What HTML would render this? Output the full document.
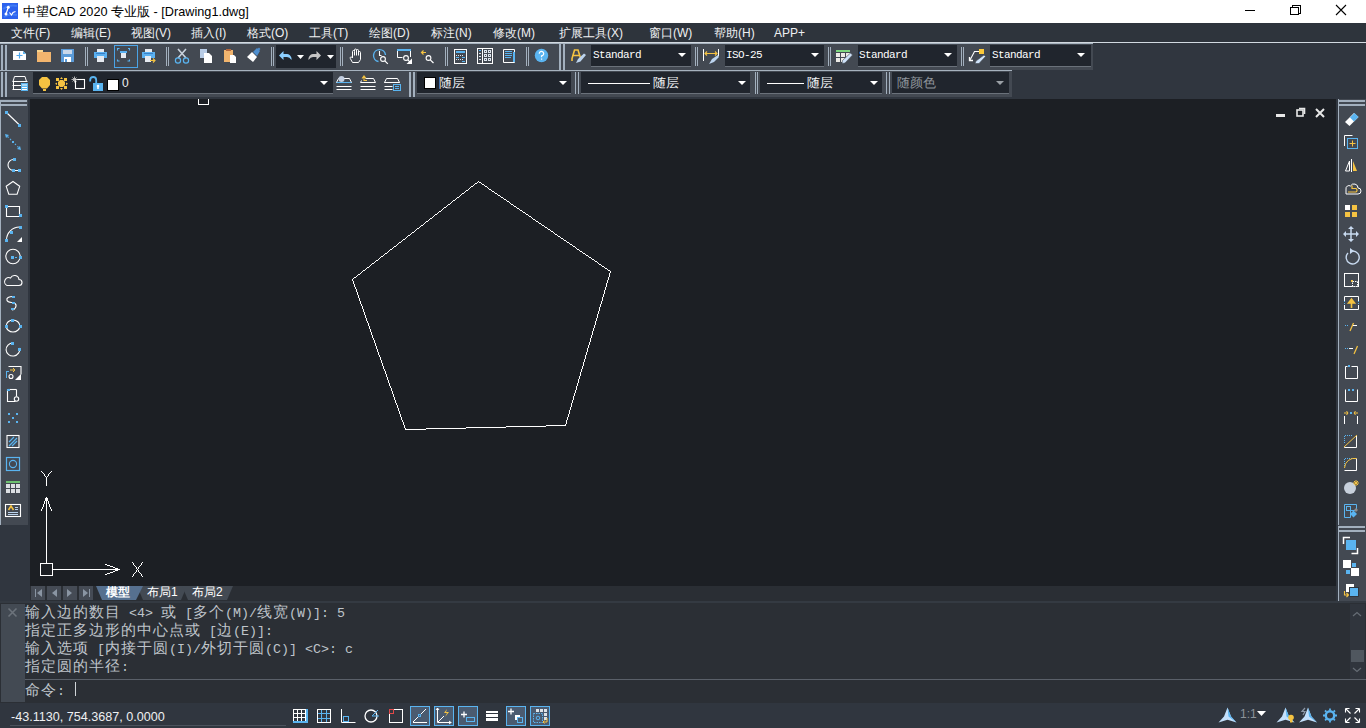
<!DOCTYPE html>
<html><head><meta charset="utf-8">
<style>
*{margin:0;padding:0;box-sizing:border-box}
html,body{width:1366px;height:728px;overflow:hidden;background:#30363f;font-family:"Liberation Sans",sans-serif}
.a{position:absolute}
.bg{position:absolute}
.t{position:absolute;white-space:pre;font-family:"Liberation Sans",sans-serif}
.mi{position:absolute;top:25px;font-size:12px;color:#eef0f2;line-height:17px;white-space:pre}
.cb{position:absolute;background:#20252d;border-bottom:1px solid #6a717a}
.sm{position:absolute;font-family:"Liberation Mono",monospace;font-size:11px;color:#fff;letter-spacing:-0.6px;white-space:pre;line-height:14px}
.cn{position:absolute;font-size:13px;color:#f0f2f4;white-space:pre;line-height:16px}
.cm{position:absolute;left:25px;font-family:"Liberation Mono",monospace;font-size:13.33px;color:#bfc4ca;white-space:pre;line-height:18px}
.cm b{font-weight:normal;font-size:15px;letter-spacing:1px;font-family:"Liberation Sans",sans-serif}
svg{position:absolute;left:0;top:0;z-index:1}
.t,.mi,.sm,.cn,.cm{z-index:2}
</style></head><body>
<!-- backgrounds -->
<div class="bg" style="left:0;top:0;width:1366px;height:23px;background:#fff"></div>
<div class="bg" style="left:0;top:23px;width:1366px;height:19px;background:#2e343c"></div>
<div class="bg" style="left:0;top:42px;width:1366px;height:1px;background:#d2d9e0"></div>
<div class="bg" style="left:0;top:43px;width:1093px;height:1px;background:#a6b2be"></div>
<div class="bg" style="left:0;top:44px;width:1093px;height:26px;background:#434952"></div>
<div class="bg" style="left:0;top:70px;width:1012px;height:1px;background:#a6b2be"></div>
<div class="bg" style="left:0;top:71px;width:1012px;height:26px;background:#434952"></div>
<div class="bg" style="left:0;top:99px;width:28px;height:426px;background:#434952"></div>
<div class="bg" style="left:1338px;top:99px;width:28px;height:502px;background:#434952"></div>
<div class="bg" style="left:30px;top:99px;width:1306px;height:487px;background:#1c1f24"></div>
<div class="bg" style="left:0;top:603px;width:1366px;height:100px;background:#2b2f35"></div>
<!-- title -->
<div class="t" style="left:23px;top:4px;font-size:12.7px;line-height:17px;color:#000">中望CAD 2020 专业版 - [Drawing1.dwg]</div>
<!-- menu -->
<div class="mi" style="left:11px">文件(F)</div>
<div class="mi" style="left:71px">编辑(E)</div>
<div class="mi" style="left:131px">视图(V)</div>
<div class="mi" style="left:191px">插入(I)</div>
<div class="mi" style="left:247px">格式(O)</div>
<div class="mi" style="left:309px">工具(T)</div>
<div class="mi" style="left:369px">绘图(D)</div>
<div class="mi" style="left:431px">标注(N)</div>
<div class="mi" style="left:493px">修改(M)</div>
<div class="mi" style="left:559px">扩展工具(X)</div>
<div class="mi" style="left:649px">窗口(W)</div>
<div class="mi" style="left:714px">帮助(H)</div>
<div class="mi" style="left:774px">APP+</div>
<!-- toolbar1 combos -->
<div class="cb" style="left:276px;top:45px;width:60px;height:23px;border:none"></div>
<div class="cb" style="left:591px;top:45px;width:100px;height:22px"></div>
<div class="cb" style="left:725px;top:45px;width:99px;height:22px"></div>
<div class="cb" style="left:858px;top:45px;width:99px;height:22px"></div>
<div class="cb" style="left:990px;top:45px;width:101px;height:22px"></div>
<div class="sm" style="left:593px;top:48px">Standard</div>
<div class="sm" style="left:726px;top:48px">ISO-25</div>
<div class="sm" style="left:859px;top:48px">Standard</div>
<div class="sm" style="left:992px;top:48px">Standard</div>
<!-- toolbar2 combos -->
<div class="cb" style="left:33px;top:72px;width:300px;height:22px"></div>
<div class="cb" style="left:417px;top:72px;width:154px;height:22px"></div>
<div class="cb" style="left:581px;top:72px;width:169px;height:22px"></div>
<div class="cb" style="left:760px;top:72px;width:122px;height:22px"></div>
<div class="cb" style="left:892px;top:72px;width:117px;height:22px"></div>
<div class="cn" style="left:122px;top:75px;font-size:12px">0</div>
<div class="cn" style="left:439px;top:75px">随层</div>
<div class="cn" style="left:653px;top:75px">随层</div>
<div class="cn" style="left:807px;top:75px">随层</div>
<div class="cn" style="left:897px;top:75px;color:#8f959c">随颜色</div>
<!-- tabs -->
<div class="t" style="left:106px;top:585px;font-size:12px;line-height:15px;color:#fff;font-weight:bold">模型</div>
<div class="t" style="left:147px;top:585px;font-size:12px;line-height:15px;color:#fff">布局1</div>
<div class="t" style="left:192px;top:585px;font-size:12px;line-height:15px;color:#fff">布局2</div>
<!-- command -->
<div class="bg" style="left:1px;top:604px;width:24px;height:98px;background:#434a53"></div>
<div class="cm" style="top:603px"><b>输入边的数目</b> &lt;4&gt; <b>或</b> [<b>多个</b>(M)/<b>线宽</b>(W)]: 5</div>
<div class="cm" style="top:621px"><b>指定正多边形的中心点或</b> [<b>边</b>(E)]:</div>
<div class="cm" style="top:639px"><b>输入选项</b> [<b>内接于圆</b>(I)/<b>外切于圆</b>(C)] &lt;C&gt;: c</div>
<div class="cm" style="top:657px"><b>指定圆的半径</b>:</div>
<div class="bg" style="left:25px;top:679px;width:1341px;height:1px;background:#5a6069"></div>
<div class="cm" style="top:681px"><b>命令</b>: </div>
<div class="bg" style="left:75px;top:682px;width:1px;height:14px;background:#d0d4d8"></div>
<div class="bg" style="left:1350px;top:604px;width:15px;height:75px;background:#30353d"></div>
<div class="bg" style="left:1351px;top:650px;width:13px;height:12px;background:#50575f"></div>
<!-- status -->
<div class="t" style="left:11px;top:709px;font-size:12.6px;line-height:16px;color:#eef0f2">-43.1130, 754.3687, 0.0000</div>
<div class="bg" style="left:10px;top:725px;width:276px;height:1px;background:#4b525c"></div>
<div class="t" style="left:1240px;top:706px;font-size:12px;line-height:16px;color:#8d939a">1:1</div>
<svg width="1366" height="728" viewBox="0 0 1366 728">
<defs>
<linearGradient id="lg" x1="0" y1="0" x2="1" y2="1"><stop offset="0" stop-color="#5a8df5"/><stop offset="1" stop-color="#1d4fd8"/></linearGradient>
</defs>
<!-- title icon -->
<rect x="2" y="3" width="16" height="16" fill="#2c62ee"/>
<path d="M3 9c4-3 9-4 14-3M4 17c3-2 8-3 13-2" stroke="#4a86f7" stroke-width="2" fill="none" opacity="0.7"/>
<path d="M8.3 7.3L6 14M9.5 12.5l2 2.5 1.5-2.5 2.5-1" stroke="#fff" stroke-width="1.2" fill="none"/>
<circle cx="8.3" cy="7.3" r="1.5" fill="#fff"/><circle cx="6" cy="14" r="1.5" fill="#fff"/>
<!-- window buttons -->
<g stroke="#000" stroke-width="1" fill="none" shape-rendering="crispEdges">
<path d="M1245 10.5h10"/>
<rect x="1290.5" y="7.5" width="8" height="7"/>
<path d="M1292.5 7.5v-2h8v8h-2"/>
</g>
<path d="M1336 5l10 10M1346 5l-10 10" stroke="#000" stroke-width="1.1"/>

<!-- toolbar grips -->
<g fill="#a3b0be" shape-rendering="crispEdges">
<rect x="1" y="45" width="2" height="25"/><rect x="5" y="45" width="2" height="25"/>
<rect x="1" y="72" width="2" height="25"/><rect x="5" y="72" width="2" height="25"/>
<rect x="559" y="44" width="2" height="26"/><rect x="563" y="44" width="2" height="26"/>
<!-- small separators tb1 -->
<rect x="85" y="47" width="1" height="19"/><rect x="87" y="47" width="1" height="19"/>
<rect x="166" y="47" width="1" height="19"/><rect x="168" y="47" width="1" height="19"/>
<rect x="271" y="47" width="1" height="19"/><rect x="273" y="47" width="1" height="19"/>
<rect x="340" y="47" width="1" height="19"/><rect x="342" y="47" width="1" height="19"/>
<rect x="445" y="47" width="1" height="19"/><rect x="447" y="47" width="1" height="19"/>
<rect x="526" y="47" width="1" height="19"/><rect x="528" y="47" width="1" height="19"/>
<rect x="695" y="47" width="1" height="19"/><rect x="697" y="47" width="1" height="19"/>
<rect x="828" y="47" width="1" height="19"/><rect x="830" y="47" width="1" height="19"/>
<rect x="961" y="47" width="1" height="19"/><rect x="963" y="47" width="1" height="19"/>
<!-- tb2 separators -->
<rect x="409" y="72" width="2" height="25"/><rect x="413" y="72" width="2" height="25"/>
<rect x="575" y="72" width="1" height="22"/><rect x="578" y="72" width="1" height="22"/>
<rect x="755" y="72" width="1" height="22"/><rect x="757" y="72" width="1" height="22"/>
<rect x="886" y="72" width="1" height="22"/><rect x="889" y="72" width="1" height="22"/>
<!-- left tb grip -->
<rect x="0" y="100" width="1" height="425"/>
<rect x="1" y="100" width="26" height="2"/><rect x="1" y="104" width="26" height="2"/>
<!-- right tb grip -->
<rect x="1338" y="99" width="1" height="426"/>
<rect x="1339" y="100" width="26" height="2"/><rect x="1339" y="104" width="26" height="2"/>
<rect x="1338" y="526" width="1" height="75"/>
<rect x="1339" y="526" width="26" height="2"/><rect x="1339" y="530" width="26" height="2"/>
</g>

<!-- ===== toolbar1 icons ===== -->
<!-- new -->
<path d="M13 51h10l3 3v6h-13z" fill="#fff"/>
<path d="M23 51l3 3h-3z" fill="#5ab4f0"/>
<path d="M19.5 52.5v6M16.5 55.5h6" stroke="#4fa8ee" stroke-width="1.2"/>
<!-- folder -->
<rect x="37" y="50" width="6" height="3" fill="#f8d590"/>
<rect x="37" y="52" width="14" height="10" fill="#f2b56e"/>
<!-- save -->
<rect x="61" y="49" width="13" height="13" fill="#5b9bd8"/>
<rect x="63" y="50" width="9" height="4" fill="#c9d8ea"/>
<rect x="64" y="57" width="7" height="5" fill="#fff"/>
<rect x="65" y="59" width="2" height="3" fill="#5b9bd8"/>
<!-- print -->
<rect x="97" y="49" width="7" height="3" fill="#e6eaf0"/>
<rect x="94" y="52" width="13" height="6" fill="#5ab0f0"/><rect x="96" y="53" width="9" height="1" fill="#3b7fc4"/>
<rect x="97" y="56" width="7" height="6" fill="#e6eaf0"/>
<!-- print preview box -->
<rect x="114.5" y="45.5" width="23" height="22" fill="none" stroke="#4aa3e6"/>
<path d="M117.5 50.5v-2h2M128 48.5h1.5v2M129.5 59.5v1.5h-2M119.5 61h-2v-1.5" stroke="#5ab4f0" fill="none" stroke-width="1.1"/>
<rect x="120" y="51" width="7" height="2" fill="#5ab0f0"/>
<rect x="121" y="53" width="5" height="5" fill="#e6eaf0"/>
<!-- plot -->
<rect x="145" y="49" width="7" height="3" fill="#e6eaf0"/>
<rect x="142" y="52" width="13" height="6" fill="#5ab0f0"/><rect x="144" y="53" width="9" height="1" fill="#3b7fc4"/>
<rect x="145" y="56" width="6" height="6" fill="#e6eaf0"/>
<path d="M150 60.5h5M153 58.5l2 2-2 2" stroke="#f5c342" fill="none" stroke-width="1.1"/>
<!-- scissors -->
<path d="M178 49l8 9M186 49l-8 9" stroke="#c9d2dc" stroke-width="1.6"/>
<circle cx="178" cy="60.5" r="2.6" fill="none" stroke="#5ab4f0" stroke-width="1.2"/>
<circle cx="186" cy="60.5" r="2.6" fill="none" stroke="#5ab4f0" stroke-width="1.2"/>
<!-- copy -->
<rect x="200" y="49" width="7" height="9" fill="#b8cce6"/>
<path d="M204 53h5l3 3v7h-8z" fill="#fff"/>
<!-- paste -->
<rect x="224" y="50" width="9" height="12" fill="#f2b56e"/>
<rect x="226" y="49" width="5" height="2" fill="#b5673c"/>
<path d="M230 55h4l2 2v6h-6z" fill="#fff"/>
<!-- brush -->
<path d="M247 57l5-5 5 5-4 5z" fill="#fff"/>
<path d="M253 52l4-4 3 3-3 5z" fill="#4f8fcf"/>
<rect x="258" y="48" width="2" height="2" fill="#4f8fcf" transform="rotate(45 259 49)"/>
<!-- undo / redo -->
<path d="M279 55.5L283.5 51V54H287Q290 54 291.5 58V60Q289.5 57 287 57H283.5V60Z" fill="#8ccfff"/>
<path d="M297 55h7l-3.5 4z" fill="#fff"/>
<path d="M321 55.5L316.5 51V54H313Q310 54 308.5 58V60Q310.5 57 313 57H316.5V60Z" fill="#c4c4c4"/>
<path d="M327 55h7l-3.5 4z" fill="#fff"/>
<!-- hand -->
<path d="M352.5 58V51.5a1 1 0 0 1 2 0V55.5M354.5 51V50a1 1 0 0 1 2 0V55.5M356.5 50.5a1 1 0 0 1 2 0V55.5M358.5 52.5a1 1 0 0 1 2 0V59.5L358.5 62.5H352.5L350.3 58.5a1 1 0 0 1 1.5-1.3L352.5 58" fill="none" stroke="#fff" stroke-width="1"/>
<!-- zoom realtime -->
<path d="M378.5 61.5A6 6 0 1 1 385.5 55" fill="none" stroke="#5ab4f0" stroke-width="1.4"/>
<path d="M379.5 51v4.5h2" stroke="#fff" fill="none" stroke-width="1.1"/>
<circle cx="383" cy="59" r="2.4" fill="none" stroke="#fff" stroke-width="1.1"/>
<path d="M384.8 60.8l3 3" stroke="#fff" stroke-width="1.2"/>
<!-- zoom window -->
<path d="M397.5 50v7.5h5M410.5 50v7" fill="none" stroke="#fff"/>
<rect x="397" y="49" width="14" height="2" fill="#5ab4f0"/>
<circle cx="406" cy="58" r="2.4" fill="none" stroke="#fff" stroke-width="1.1"/>
<path d="M407.8 59.8l2.5 2.5" stroke="#fff" stroke-width="1.2"/>
<path d="M412 58.5v5.5h-5.5z" fill="#fff"/>
<!-- zoom previous -->
<path d="M421.5 52.5h4.5M423.5 50.5l-2 2 2 2" stroke="#f5c342" fill="none" stroke-width="1.2"/>
<circle cx="428.5" cy="58" r="2.4" fill="none" stroke="#fff" stroke-width="1.1"/>
<path d="M430.3 59.8l3.2 3.2" stroke="#fff" stroke-width="1.2"/>
<!-- calc -->
<rect x="454.5" y="49.5" width="12" height="14" fill="none" stroke="#fff"/>
<rect x="456" y="51" width="9" height="2" fill="#5ab4f0"/>
<g fill="#dfe6ee"><rect x="456" y="55" width="1" height="1"/><rect x="458" y="55" width="1" height="1"/><rect x="460" y="55" width="1" height="1"/><rect x="462" y="55" width="1" height="1"/><rect x="456" y="59" width="1" height="1"/><rect x="458" y="59" width="1" height="1"/><rect x="460" y="59" width="1" height="1"/><rect x="462" y="59" width="1" height="1"/></g>
<rect x="456" y="57" width="3" height="1" fill="#5ab4f0"/><rect x="462" y="57" width="3" height="1" fill="#5ab4f0"/><rect x="462" y="61" width="3" height="1" fill="#5ab4f0"/>
<!-- grid -->
<rect x="477.5" y="48.5" width="15" height="15" fill="none" stroke="#fff"/>
<path d="M482.5 48.5v15" stroke="#fff"/>
<g fill="none" stroke="#dfe6ee"><rect x="484.5" y="50.5" width="2" height="2"/><rect x="488.5" y="50.5" width="2" height="2"/><rect x="484.5" y="54.5" width="2" height="2"/><rect x="488.5" y="54.5" width="2" height="2"/><rect x="484.5" y="58.5" width="2" height="2"/><rect x="488.5" y="58.5" width="2" height="2"/></g>
<rect x="479" y="50" width="2" height="1" fill="#5ab4f0"/>
<g fill="#dfe6ee"><rect x="479" y="53" width="2" height="1"/><rect x="479" y="56" width="2" height="1"/><rect x="479" y="59" width="2" height="1"/></g>
<!-- doc -->
<path d="M503.5 49.5h11v13h-11z" fill="none" stroke="#fff"/>
<rect x="505" y="51" width="7" height="1" fill="#5ab4f0"/><rect x="505" y="53" width="7" height="1" fill="#5ab4f0"/><rect x="505" y="55" width="7" height="1" fill="#5ab4f0"/><rect x="505" y="57" width="6" height="1" fill="#5ab4f0"/>
<rect x="513" y="52" width="2" height="10" fill="#5ab4f0"/>
<!-- help -->
<circle cx="541.5" cy="55.5" r="6.7" fill="#5ab4f0"/>
<path d="M539.3 53.8a2.2 2.2 0 1 1 2.2 2v1.5" fill="none" stroke="#fff" stroke-width="1.2"/>
<rect x="541" y="58.5" width="1.2" height="1.2" fill="#fff"/>
<!-- text style -->
<path d="M572 61v-2.5l2.5-8.5h3.5l2.5 8M572.5 55.5h7" stroke="#f5c342" stroke-width="1.6" fill="none"/>
<path d="M576 63l2-4 6-5.5 2 1.5-5.5 6.5z" fill="#bcd4ee"/>
<!-- combos triangles -->
<g fill="#fff">
<path d="M678 53h8l-4 4z"/><path d="M811 53h8l-4 4z"/><path d="M944 53h8l-4 4z"/><path d="M1077 53h8l-4 4z"/>
<path d="M320 81h8l-4 4z"/><path d="M559 81h8l-4 4z"/><path d="M738 81h8l-4 4z"/><path d="M870 81h8l-4 4z"/>
</g>
<path d="M996 81h8l-4 4z" fill="#9aa0a6"/>
<!-- dim style -->
<path d="M703.5 49v12M718.5 49v7" stroke="#fff"/>
<path d="M705 53.5h12M707 51.5l-2 2 2 2M715 51.5l2 2-2 2" stroke="#f5c342" fill="none" stroke-width="1.1"/>
<path d="M709 64l3-5 6-4 1 2-5 5z" fill="#bcd4ee"/>
<!-- table style -->
<rect x="836" y="50" width="14" height="2" fill="#7dd67f"/>
<g fill="#eceae6"><rect x="836" y="53" width="4" height="4"/><rect x="841" y="53" width="4" height="4"/><rect x="846" y="53" width="4" height="4"/><rect x="836" y="58" width="4" height="4"/><rect x="841" y="58" width="4" height="4"/></g>
<path d="M842 63.5l0.5-3 8-7.5 2 2-7.5 8z" fill="#cfe3fa" stroke="#434952" stroke-width="0.6"/>
<!-- mleader -->
<rect x="979" y="49" width="5" height="5" fill="#fbc93a"/>
<path d="M979 51.5h-4.5l-4.5 8.5" stroke="#fff" fill="none" stroke-width="1.1"/>
<path d="M969.5 57v3.5h3.5" stroke="#fff" fill="none" stroke-width="1.3"/>
<path d="M975 63.5l1-2.5 8-6 1.5 1.5-6.5 7z" fill="#cfe3fa" stroke="#434952" stroke-width="0.6"/>
<!-- ===== toolbar2 icons ===== -->
<!-- layer manager -->
<g stroke="#fff" fill="none" stroke-width="1">
<path d="M13 81.5l1.5-5h10.5l1.5 5zM12.5 81.5h15M12.5 85.5h9M12.5 89.5h9M13.5 81.5v8"/>
</g>
<rect x="21" y="83" width="7" height="8" fill="#5ab4f0"/>
<path d="M22 85h5M22 87.5h5M22 89.5h5" stroke="#fff" stroke-width="1"/>
<!-- bulb -->
<path d="M42 77h5l3 3v5l-3 3.5h-5l-3-3.5v-5z" fill="#f5c342"/>
<rect x="43" y="89" width="3" height="2" fill="#f5c342"/>
<!-- sun -->
<g fill="#f5c342"><path d="M60 80h3l2 2v3l-2 2h-3l-2-2v-3z"/><rect x="56" y="78" width="3" height="3"/><rect x="64" y="78" width="3" height="3"/><rect x="56" y="86" width="3" height="3"/><rect x="64" y="86" width="3" height="3"/>
<path d="M60 79h3l-1.5-2zM60 88h3l-1.5 2zM57 82.5v2.5l-2-1.25zM66 82.5v2.5l2-1.25z"/></g>
<!-- freeze vp -->
<rect x="75.5" y="79.5" width="9" height="9" fill="none" stroke="#fff" stroke-width="1.1"/>
<path d="M72.5 77.5l4 4M76.5 77.5l-4 4M74.5 76.5v6M71.5 79.5h6" stroke="#c8c8c8" stroke-width="0.9"/>
<!-- lock -->
<path d="M90.2 81.5v-1.5a3 3 0 0 1 6 0v3" fill="none" stroke="#5ab4f0" stroke-width="1.8"/>
<rect x="93" y="83" width="10" height="8" fill="#5ab4f0"/>
<circle cx="98" cy="86" r="1.3" fill="#fff"/><rect x="97.2" y="86" width="1.6" height="3" fill="#fff"/>
<!-- color swatch -->
<rect x="107.5" y="79.5" width="11" height="11" fill="#fff" stroke="#000"/>
<!-- layer icons -->
<g stroke="#fff" fill="none">
<path d="M336.5 82.5l2-4h11l2 4zM336.5 82.5h15M336.5 86.5h15M336.5 89.5h15"/>
<path d="M365.5 78.5h8l2 4M360.5 82.5h15M360.5 86.5h15M360.5 89.5h15M360.5 82.5l1-2"/>
<path d="M384.5 82.5l2-4h11l2 4zM384.5 82.5h15M384.5 86.5h8M384.5 89.5h8"/>
</g>
<path d="M336.5 82.5h15" stroke="#5ab4f0"/>
<circle cx="341.5" cy="79" r="3" fill="#c2cee0"/>
<path d="M367 80.5h-3v-4M362 78.5l2-2.5 2 2.5" stroke="#f5c342" fill="none" stroke-width="1.1"/>
<rect x="393.5" y="84.5" width="7" height="6" fill="#434952" stroke="#5ab4f0"/>
<path d="M395 86.5h4M395 88.5h4" stroke="#5ab4f0"/>
<!-- color combo swatch -->
<rect x="424.5" y="77.5" width="11" height="11" fill="#fff" stroke="#000"/>
<!-- linetype lines -->
<rect x="588" y="83" width="62" height="1" fill="#fff"/>
<rect x="767" y="83" width="37" height="1" fill="#fff"/>

<!-- ===== canvas ===== -->
<g fill="none" stroke="#fff" shape-rendering="crispEdges">
<path d="M198.5 99v5.5h10v-5.5"/>
</g>
<path fill="#fff" d="M478 181h1v1h-1zM477 182h1v1h-1zM479 182h2v1h-2zM475 183h2v1h-2zM481 183h1v1h-1zM474 184h1v1h-1zM482 184h2v1h-2zM473 185h1v1h-1zM484 185h1v1h-1zM471 186h2v1h-2zM485 186h2v1h-2zM470 187h1v1h-1zM487 187h1v1h-1zM469 188h1v1h-1zM488 188h1v1h-1zM468 189h1v1h-1zM489 189h2v1h-2zM466 190h2v1h-2zM491 190h1v1h-1zM465 191h1v1h-1zM492 191h2v1h-2zM464 192h1v1h-1zM494 192h1v1h-1zM462 193h2v1h-2zM495 193h2v1h-2zM461 194h1v1h-1zM497 194h1v1h-1zM460 195h1v1h-1zM498 195h2v1h-2zM459 196h1v1h-1zM500 196h1v1h-1zM457 197h2v1h-2zM501 197h2v1h-2zM456 198h1v1h-1zM503 198h1v1h-1zM455 199h1v1h-1zM504 199h2v1h-2zM453 200h2v1h-2zM506 200h1v1h-1zM452 201h1v1h-1zM507 201h2v1h-2zM451 202h1v1h-1zM509 202h1v1h-1zM450 203h1v1h-1zM510 203h1v1h-1zM448 204h2v1h-2zM511 204h2v1h-2zM447 205h1v1h-1zM513 205h1v1h-1zM446 206h1v1h-1zM514 206h2v1h-2zM444 207h2v1h-2zM516 207h1v1h-1zM443 208h1v1h-1zM517 208h2v1h-2zM442 209h1v1h-1zM519 209h1v1h-1zM441 210h1v1h-1zM520 210h2v1h-2zM439 211h2v1h-2zM522 211h1v1h-1zM438 212h1v1h-1zM523 212h2v1h-2zM437 213h1v1h-1zM525 213h1v1h-1zM435 214h2v1h-2zM526 214h2v1h-2zM434 215h1v1h-1zM528 215h1v1h-1zM433 216h1v1h-1zM529 216h2v1h-2zM432 217h1v1h-1zM531 217h1v1h-1zM430 218h2v1h-2zM532 218h1v1h-1zM429 219h1v1h-1zM533 219h2v1h-2zM428 220h1v1h-1zM535 220h1v1h-1zM426 221h2v1h-2zM536 221h2v1h-2zM425 222h1v1h-1zM538 222h1v1h-1zM424 223h1v1h-1zM539 223h2v1h-2zM423 224h1v1h-1zM541 224h1v1h-1zM421 225h2v1h-2zM542 225h2v1h-2zM420 226h1v1h-1zM544 226h1v1h-1zM419 227h1v1h-1zM545 227h2v1h-2zM417 228h2v1h-2zM547 228h1v1h-1zM416 229h1v1h-1zM548 229h2v1h-2zM415 230h1v1h-1zM550 230h1v1h-1zM414 231h1v1h-1zM551 231h2v1h-2zM412 232h2v1h-2zM553 232h1v1h-1zM411 233h1v1h-1zM554 233h1v1h-1zM410 234h1v1h-1zM555 234h2v1h-2zM408 235h2v1h-2zM557 235h1v1h-1zM407 236h1v1h-1zM558 236h2v1h-2zM406 237h1v1h-1zM560 237h1v1h-1zM405 238h1v1h-1zM561 238h2v1h-2zM403 239h2v1h-2zM563 239h1v1h-1zM402 240h1v1h-1zM564 240h2v1h-2zM401 241h1v1h-1zM566 241h1v1h-1zM399 242h2v1h-2zM567 242h2v1h-2zM398 243h1v1h-1zM569 243h1v1h-1zM397 244h1v1h-1zM570 244h2v1h-2zM396 245h1v1h-1zM572 245h1v1h-1zM394 246h2v1h-2zM573 246h2v1h-2zM393 247h1v1h-1zM575 247h1v1h-1zM392 248h1v1h-1zM576 248h1v1h-1zM390 249h2v1h-2zM577 249h2v1h-2zM389 250h1v1h-1zM579 250h1v1h-1zM388 251h1v1h-1zM580 251h2v1h-2zM387 252h1v1h-1zM582 252h1v1h-1zM385 253h2v1h-2zM583 253h2v1h-2zM384 254h1v1h-1zM585 254h1v1h-1zM383 255h1v1h-1zM586 255h2v1h-2zM381 256h2v1h-2zM588 256h1v1h-1zM380 257h1v1h-1zM589 257h2v1h-2zM379 258h1v1h-1zM591 258h1v1h-1zM378 259h1v1h-1zM592 259h2v1h-2zM376 260h2v1h-2zM594 260h1v1h-1zM375 261h1v1h-1zM595 261h2v1h-2zM374 262h1v1h-1zM597 262h1v1h-1zM372 263h2v1h-2zM598 263h1v1h-1zM371 264h1v1h-1zM599 264h2v1h-2zM370 265h1v1h-1zM601 265h1v1h-1zM369 266h1v1h-1zM602 266h2v1h-2zM367 267h2v1h-2zM604 267h1v1h-1zM366 268h1v1h-1zM605 268h2v1h-2zM365 269h1v1h-1zM607 269h1v1h-1zM363 270h2v1h-2zM608 270h2v1h-2zM362 271h1v1h-1zM610 271h1v1h-1zM361 272h1v1h-1zM610 272h1v1h-1zM360 273h1v1h-1zM609 273h1v1h-1zM358 274h2v1h-2zM609 274h1v1h-1zM357 275h1v1h-1zM609 275h1v1h-1zM356 276h1v1h-1zM609 276h1v1h-1zM354 277h2v1h-2zM608 277h1v1h-1zM353 278h1v1h-1zM608 278h1v1h-1zM352 279h1v1h-1zM608 279h1v1h-1zM352 280h1v1h-1zM607 280h1v1h-1zM353 281h1v1h-1zM607 281h1v1h-1zM353 282h1v1h-1zM607 282h1v1h-1zM353 283h1v1h-1zM606 283h1v1h-1zM354 284h1v1h-1zM606 284h1v1h-1zM354 285h1v1h-1zM606 285h1v1h-1zM354 286h1v1h-1zM606 286h1v1h-1zM355 287h1v1h-1zM605 287h1v1h-1zM355 288h1v1h-1zM605 288h1v1h-1zM356 289h1v1h-1zM605 289h1v1h-1zM356 290h1v1h-1zM604 290h1v1h-1zM356 291h1v1h-1zM604 291h1v1h-1zM357 292h1v1h-1zM604 292h1v1h-1zM357 293h1v1h-1zM604 293h1v1h-1zM357 294h1v1h-1zM603 294h1v1h-1zM358 295h1v1h-1zM603 295h1v1h-1zM358 296h1v1h-1zM603 296h1v1h-1zM358 297h1v1h-1zM602 297h1v1h-1zM359 298h1v1h-1zM602 298h1v1h-1zM359 299h1v1h-1zM602 299h1v1h-1zM359 300h1v1h-1zM602 300h1v1h-1zM360 301h1v1h-1zM601 301h1v1h-1zM360 302h1v1h-1zM601 302h1v1h-1zM360 303h1v1h-1zM601 303h1v1h-1zM361 304h1v1h-1zM600 304h1v1h-1zM361 305h1v1h-1zM600 305h1v1h-1zM362 306h1v1h-1zM600 306h1v1h-1zM362 307h1v1h-1zM599 307h1v1h-1zM362 308h1v1h-1zM599 308h1v1h-1zM363 309h1v1h-1zM599 309h1v1h-1zM363 310h1v1h-1zM599 310h1v1h-1zM363 311h1v1h-1zM598 311h1v1h-1zM364 312h1v1h-1zM598 312h1v1h-1zM364 313h1v1h-1zM598 313h1v1h-1zM364 314h1v1h-1zM597 314h1v1h-1zM365 315h1v1h-1zM597 315h1v1h-1zM365 316h1v1h-1zM597 316h1v1h-1zM365 317h1v1h-1zM597 317h1v1h-1zM366 318h1v1h-1zM596 318h1v1h-1zM366 319h1v1h-1zM596 319h1v1h-1zM366 320h1v1h-1zM596 320h1v1h-1zM367 321h1v1h-1zM595 321h1v1h-1zM367 322h1v1h-1zM595 322h1v1h-1zM368 323h1v1h-1zM595 323h1v1h-1zM368 324h1v1h-1zM595 324h1v1h-1zM368 325h1v1h-1zM594 325h1v1h-1zM369 326h1v1h-1zM594 326h1v1h-1zM369 327h1v1h-1zM594 327h1v1h-1zM369 328h1v1h-1zM593 328h1v1h-1zM370 329h1v1h-1zM593 329h1v1h-1zM370 330h1v1h-1zM593 330h1v1h-1zM370 331h1v1h-1zM592 331h1v1h-1zM371 332h1v1h-1zM592 332h1v1h-1zM371 333h1v1h-1zM592 333h1v1h-1zM371 334h1v1h-1zM592 334h1v1h-1zM372 335h1v1h-1zM591 335h1v1h-1zM372 336h1v1h-1zM591 336h1v1h-1zM372 337h1v1h-1zM591 337h1v1h-1zM373 338h1v1h-1zM590 338h1v1h-1zM373 339h1v1h-1zM590 339h1v1h-1zM374 340h1v1h-1zM590 340h1v1h-1zM374 341h1v1h-1zM590 341h1v1h-1zM374 342h1v1h-1zM589 342h1v1h-1zM375 343h1v1h-1zM589 343h1v1h-1zM375 344h1v1h-1zM589 344h1v1h-1zM375 345h1v1h-1zM588 345h1v1h-1zM376 346h1v1h-1zM588 346h1v1h-1zM376 347h1v1h-1zM588 347h1v1h-1zM376 348h1v1h-1zM587 348h1v1h-1zM377 349h1v1h-1zM587 349h1v1h-1zM377 350h1v1h-1zM587 350h1v1h-1zM377 351h1v1h-1zM587 351h1v1h-1zM378 352h1v1h-1zM586 352h1v1h-1zM378 353h1v1h-1zM586 353h1v1h-1zM378 354h1v1h-1zM586 354h1v1h-1zM379 355h1v1h-1zM585 355h1v1h-1zM379 356h1v1h-1zM585 356h1v1h-1zM380 357h1v1h-1zM585 357h1v1h-1zM380 358h1v1h-1zM585 358h1v1h-1zM380 359h1v1h-1zM584 359h1v1h-1zM381 360h1v1h-1zM584 360h1v1h-1zM381 361h1v1h-1zM584 361h1v1h-1zM381 362h1v1h-1zM583 362h1v1h-1zM382 363h1v1h-1zM583 363h1v1h-1zM382 364h1v1h-1zM583 364h1v1h-1zM382 365h1v1h-1zM583 365h1v1h-1zM383 366h1v1h-1zM582 366h1v1h-1zM383 367h1v1h-1zM582 367h1v1h-1zM383 368h1v1h-1zM582 368h1v1h-1zM384 369h1v1h-1zM581 369h1v1h-1zM384 370h1v1h-1zM581 370h1v1h-1zM385 371h1v1h-1zM581 371h1v1h-1zM385 372h1v1h-1zM580 372h1v1h-1zM385 373h1v1h-1zM580 373h1v1h-1zM386 374h1v1h-1zM580 374h1v1h-1zM386 375h1v1h-1zM580 375h1v1h-1zM386 376h1v1h-1zM579 376h1v1h-1zM387 377h1v1h-1zM579 377h1v1h-1zM387 378h1v1h-1zM579 378h1v1h-1zM387 379h1v1h-1zM578 379h1v1h-1zM388 380h1v1h-1zM578 380h1v1h-1zM388 381h1v1h-1zM578 381h1v1h-1zM388 382h1v1h-1zM578 382h1v1h-1zM389 383h1v1h-1zM577 383h1v1h-1zM389 384h1v1h-1zM577 384h1v1h-1zM389 385h1v1h-1zM577 385h1v1h-1zM390 386h1v1h-1zM576 386h1v1h-1zM390 387h1v1h-1zM576 387h1v1h-1zM391 388h1v1h-1zM576 388h1v1h-1zM391 389h1v1h-1zM576 389h1v1h-1zM391 390h1v1h-1zM575 390h1v1h-1zM392 391h1v1h-1zM575 391h1v1h-1zM392 392h1v1h-1zM575 392h1v1h-1zM392 393h1v1h-1zM574 393h1v1h-1zM393 394h1v1h-1zM574 394h1v1h-1zM393 395h1v1h-1zM574 395h1v1h-1zM393 396h1v1h-1zM573 396h1v1h-1zM394 397h1v1h-1zM573 397h1v1h-1zM394 398h1v1h-1zM573 398h1v1h-1zM394 399h1v1h-1zM573 399h1v1h-1zM395 400h1v1h-1zM572 400h1v1h-1zM395 401h1v1h-1zM572 401h1v1h-1zM395 402h1v1h-1zM572 402h1v1h-1zM396 403h1v1h-1zM571 403h1v1h-1zM396 404h1v1h-1zM571 404h1v1h-1zM397 405h1v1h-1zM571 405h1v1h-1zM397 406h1v1h-1zM571 406h1v1h-1zM397 407h1v1h-1zM570 407h1v1h-1zM398 408h1v1h-1zM570 408h1v1h-1zM398 409h1v1h-1zM570 409h1v1h-1zM398 410h1v1h-1zM569 410h1v1h-1zM399 411h1v1h-1zM569 411h1v1h-1zM399 412h1v1h-1zM569 412h1v1h-1zM399 413h1v1h-1zM569 413h1v1h-1zM400 414h1v1h-1zM568 414h1v1h-1zM400 415h1v1h-1zM568 415h1v1h-1zM400 416h1v1h-1zM568 416h1v1h-1zM401 417h1v1h-1zM567 417h1v1h-1zM401 418h1v1h-1zM567 418h1v1h-1zM401 419h1v1h-1zM567 419h1v1h-1zM402 420h1v1h-1zM566 420h1v1h-1zM402 421h1v1h-1zM566 421h1v1h-1zM403 422h1v1h-1zM566 422h1v1h-1zM403 423h1v1h-1zM566 423h1v1h-1zM403 424h1v1h-1zM565 424h1v1h-1zM404 425h1v1h-1zM546 425h20v1h-20zM404 426h1v1h-1zM506 426h40v1h-40zM404 427h1v1h-1zM466 427h40v1h-40zM405 428h1v1h-1zM426 428h40v1h-40zM405 429h21v1h-21zM41 471h1v1h-1zM51 471h1v1h-1zM42 472h1v1h-1zM50 472h1v1h-1zM43 473h1v1h-1zM49 473h1v1h-1zM44 474h1v1h-1zM48 474h1v1h-1zM44 475h1v1h-1zM48 475h1v1h-1zM45 476h1v1h-1zM47 476h1v1h-1zM46 477h1v1h-1zM46 478h1v1h-1zM46 479h1v1h-1zM46 480h1v1h-1zM46 481h1v1h-1zM46 482h1v1h-1zM46 483h1v1h-1zM46 484h1v1h-1zM46 485h1v1h-1zM46 497h1v1h-1zM45 498h3v1h-3zM45 499h3v1h-3zM45 500h3v1h-3zM44 501h1v1h-1zM46 501h1v1h-1zM48 501h1v1h-1zM44 502h1v1h-1zM46 502h1v1h-1zM48 502h1v1h-1zM44 503h1v1h-1zM46 503h1v1h-1zM48 503h1v1h-1zM43 504h1v1h-1zM46 504h1v1h-1zM49 504h1v1h-1zM43 505h1v1h-1zM46 505h1v1h-1zM49 505h1v1h-1zM43 506h1v1h-1zM46 506h1v1h-1zM49 506h1v1h-1zM42 507h1v1h-1zM46 507h1v1h-1zM50 507h1v1h-1zM42 508h1v1h-1zM46 508h1v1h-1zM50 508h1v1h-1zM41 509h1v1h-1zM46 509h1v1h-1zM51 509h1v1h-1zM41 510h1v1h-1zM46 510h1v1h-1zM51 510h1v1h-1zM46 511h1v1h-1zM46 512h1v1h-1zM46 513h1v1h-1zM46 514h1v1h-1zM46 515h1v1h-1zM46 516h1v1h-1zM46 517h1v1h-1zM46 518h1v1h-1zM46 519h1v1h-1zM46 520h1v1h-1zM46 521h1v1h-1zM46 522h1v1h-1zM46 523h1v1h-1zM46 524h1v1h-1zM46 525h1v1h-1zM46 526h1v1h-1zM46 527h1v1h-1zM46 528h1v1h-1zM46 529h1v1h-1zM46 530h1v1h-1zM46 531h1v1h-1zM46 532h1v1h-1zM46 533h1v1h-1zM46 534h1v1h-1zM46 535h1v1h-1zM46 536h1v1h-1zM46 537h1v1h-1zM46 538h1v1h-1zM46 539h1v1h-1zM46 540h1v1h-1zM46 541h1v1h-1zM46 542h1v1h-1zM46 543h1v1h-1zM46 544h1v1h-1zM46 545h1v1h-1zM46 546h1v1h-1zM46 547h1v1h-1zM46 548h1v1h-1zM46 549h1v1h-1zM46 550h1v1h-1zM46 551h1v1h-1zM46 552h1v1h-1zM46 553h1v1h-1zM46 554h1v1h-1zM46 555h1v1h-1zM46 556h1v1h-1zM46 557h1v1h-1zM46 558h1v1h-1zM46 559h1v1h-1zM46 560h1v1h-1zM46 561h1v1h-1zM46 562h1v1h-1zM132 562h1v1h-1zM142 562h1v1h-1zM40 563h13v1h-13zM133 563h1v1h-1zM141 563h1v1h-1zM40 564h1v1h-1zM52 564h1v1h-1zM105 564h2v1h-2zM133 564h1v1h-1zM141 564h1v1h-1zM40 565h1v1h-1zM52 565h1v1h-1zM107 565h3v1h-3zM134 565h1v1h-1zM140 565h1v1h-1zM40 566h1v1h-1zM52 566h1v1h-1zM110 566h3v1h-3zM135 566h1v1h-1zM139 566h1v1h-1zM40 567h1v1h-1zM52 567h1v1h-1zM113 567h2v1h-2zM136 567h1v1h-1zM138 567h1v1h-1zM40 568h1v1h-1zM52 568h1v1h-1zM115 568h3v1h-3zM136 568h1v1h-1zM138 568h1v1h-1zM40 569h1v1h-1zM52 569h68v1h-68zM137 569h1v1h-1zM40 570h1v1h-1zM52 570h1v1h-1zM115 570h3v1h-3zM136 570h1v1h-1zM138 570h1v1h-1zM40 571h1v1h-1zM52 571h1v1h-1zM113 571h2v1h-2zM136 571h1v1h-1zM138 571h1v1h-1zM40 572h1v1h-1zM52 572h1v1h-1zM110 572h3v1h-3zM135 572h1v1h-1zM139 572h1v1h-1zM40 573h1v1h-1zM52 573h1v1h-1zM107 573h3v1h-3zM134 573h1v1h-1zM140 573h1v1h-1zM40 574h1v1h-1zM52 574h1v1h-1zM105 574h2v1h-2zM133 574h1v1h-1zM141 574h1v1h-1zM40 575h13v1h-13zM133 575h1v1h-1zM141 575h1v1h-1zM132 576h1v1h-1zM142 576h1v1h-1z"/>
<!-- viewport buttons -->
<rect x="1276" y="114" width="9" height="3" fill="#e8e8e8"/>
<g fill="none" stroke="#e8e8e8" stroke-width="1.6"><rect x="1297" y="110" width="6" height="6"/><path d="M1299 108.5h5.5v5.5"/></g>
<path d="M1316 109l8 8M1324 109l-8 8" stroke="#e8e8e8" stroke-width="2"/>
<!-- tabs -->
<rect x="30" y="586" width="1306" height="15" fill="#2a2e34"/>
<g fill="#454b55" shape-rendering="crispEdges">
<rect x="31" y="586" width="14" height="14"/><rect x="47" y="586" width="14" height="14"/><rect x="63" y="586" width="14" height="14"/><rect x="79" y="586" width="14" height="14"/>
</g>
<g fill="#8a95a3">
<rect x="35" y="589" width="1" height="8"/><path d="M42 589v8l-5-4z"/>
<path d="M57 589v8l-5-4z"/>
<path d="M67 589v8l5-4z"/>
<path d="M83 589v8l5-4z"/><rect x="89" y="589" width="1" height="8"/>
</g>
<path d="M137 586h50l-6 14h-38z" fill="#434a53"/>
<path d="M182 586h51l-6 14h-39z" fill="#434a53"/>
<path d="M96 586h47l-7 14h-34z" fill="#56708f"/>
<rect x="0" y="601" width="1366" height="2" fill="#343a42"/>
<!-- command close -->
<path d="M8.5 608.5l8 8M16.5 608.5l-8 8" stroke="#6c737b" stroke-width="1.6"/>
<path d="M1353 616l4-3.5 4 3.5M1353 668l4 3.5 4-3.5" stroke="#666d75" fill="none" stroke-width="1.2"/>
</svg>
<svg width="1366" height="728" viewBox="0 0 1366 728">
<!-- ===== LEFT TOOLBAR ===== -->
<g stroke="#fff" fill="none" stroke-width="1.1">
<!-- line --><path d="M7 113l12.5 12"/>
<!-- xline --><path d="M7.5 136.5l11 11" stroke="#5ab4f0" stroke-dasharray="1.5 2"/>
<!-- pline arc --><path d="M13.5 159.5a5.2 5.2 0 0 0 0 11h5"/>
<!-- pentagon --><path d="M13 181.5l6.7 4.8-2.6 7.9h-8.3l-2.6-7.9z"/>
<!-- rect --><path d="M6.5 206.5h13v10h-13z"/>
<!-- arc --><path d="M6.5 240a13 13 0 0 1 13-13"/>
<!-- circle --><circle cx="13" cy="256.5" r="7.2"/>
<!-- cloud --><path d="M7 285.5h12a3 3 0 0 0 0-6a4.5 4.5 0 0 0-8.5-1.5a3.5 3.5 0 0 0-3.5 7.5z"/>
<!-- spline --><path d="M13 296.5c-4 0-7 1.5-6 4 1 2.5 6 1.5 8 3 2.5 2 0 6.5-3 6.5"/>
<!-- ellipse --><ellipse cx="13" cy="326" rx="6.8" ry="6"/>
<!-- ellipse arc --><path d="M13 343a6.8 6.5 0 1 0 6.5 5"/>
<!-- insert --><path d="M8.5 366.5h12.5v8"/><circle cx="11" cy="376.5" r="2"/>
<!-- make block --><path d="M7.5 389.5v12h8M16.5 389.5v7"/><path d="M8 389.5h8.5"/><circle cx="16.5" cy="399" r="2.2"/>
<!-- hatch --><rect x="7" y="435.5" width="12" height="12"/>
<!-- mtext --><rect x="5.5" y="504.5" width="15" height="12"/>
</g>
<g fill="#5ab4f0" shape-rendering="crispEdges">
<rect x="5" y="111" width="3" height="3"/><rect x="18" y="124" width="3" height="3"/>
<rect x="12" y="141" width="2" height="2"/>
<rect x="13" y="158" width="3" height="3"/><rect x="12" y="169" width="3" height="3"/><rect x="18" y="169" width="3" height="3"/>
<rect x="5" y="205" width="3" height="3"/><rect x="19" y="214" width="3" height="3"/>
<rect x="5" y="239" width="3" height="3"/><rect x="10" y="231" width="3" height="3"/><rect x="19" y="226" width="3" height="3"/>
<rect x="11" y="256" width="3" height="3"/><rect x="19" y="256" width="3" height="3"/><rect x="15" y="257" width="2" height="1"/>
<rect x="12" y="296" width="3" height="2"/><rect x="12" y="302" width="3" height="2"/><rect x="11" y="308" width="3" height="2"/>
<rect x="11" y="319" width="3" height="3"/><rect x="5" y="325" width="3" height="3"/><rect x="19" y="325" width="3" height="3"/>
<rect x="11" y="342" width="3" height="3"/><rect x="18" y="348" width="3" height="3"/>
<rect x="6" y="371" width="1" height="7"/><rect x="6" y="371" width="3" height="1"/>
<rect x="7" y="389" width="3" height="2"/>
<rect x="8" y="413" width="2" height="2"/><rect x="16" y="413" width="2" height="2"/><rect x="12" y="417" width="2" height="2"/><rect x="8" y="421" width="2" height="2"/><rect x="16" y="421" width="2" height="2"/>
</g>
<path d="M17 242h5v-5z" fill="#fff"/>
<path d="M15 380h6v-6z" fill="#fff"/>
<path d="M10 370h5M13 368l2 2-2 2" stroke="#f5c342" fill="none"/>
<path d="M5 134l4 1-3 3zM21 150l-4-1 3-3z" fill="#5ab4f0"/>
<g stroke="#5ab4f0" stroke-width="1.2"><path d="M9 446l8-8M9 442l5-5M12 446l5-5"/></g>
<rect x="6.5" y="457.5" width="13" height="13" fill="none" stroke="#5ab4f0" stroke-width="1.2"/>
<circle cx="13" cy="464" r="3.6" fill="none" stroke="#5ab4f0" stroke-width="1.1"/>
<rect x="6" y="481" width="14" height="2" fill="#6cc070"/>
<g fill="#dcdfe3"><rect x="6" y="484" width="4" height="4"/><rect x="11" y="484" width="4" height="4"/><rect x="16" y="484" width="4" height="4"/><rect x="6" y="489" width="4" height="4"/><rect x="11" y="489" width="4" height="4"/><rect x="16" y="489" width="4" height="4"/></g>
<path d="M8.5 510l2.5-4 2.5 4" stroke="#f5c342" stroke-width="1.6" fill="none"/>
<path d="M8 512.5h10M8 514.5h10M15 507.5h3M15 509.5h3" stroke="#bcd4ee"/>

<!-- ===== RIGHT TOOLBAR ===== -->
<!-- erase -->
<path d="M1345 122l4.5 4 9-9-4.5-4z" fill="#fff"/>
<path d="M1350 117.5l4.5-4.5 4 4-4.5 4.5z" fill="#5ab4f0"/>
<!-- copy -->
<path d="M1344.5 146v-10.5h8" stroke="#fff" fill="none"/>
<rect x="1347.5" y="138.5" width="10" height="10" fill="#434952" stroke="#5ab4f0"/>
<path d="M1352.5 140.5v6M1349.5 143.5h6" stroke="#f5c342"/>
<!-- mirror -->
<path d="M1351.5 159v13M1349.5 161l-4 10h4z" stroke="#fff" fill="none"/>
<path d="M1353 161l4 10h-4z" fill="#f5c342"/>
<!-- offset -->
<path d="M1346 194h12a3 3 0 0 0 0-6a4 4 0 0 0-7.5-2a3 3 0 0 0-4.5 3z" stroke="#fff" fill="none"/>
<path d="M1348 192h8a2 2 0 0 0 0-3.5h-4v-3" stroke="#f5c342" fill="none" stroke-width="1.2"/>
<!-- array -->
<rect x="1345" y="205" width="5" height="5" fill="#fff"/>
<rect x="1352" y="205" width="5" height="5" fill="#f5c342"/>
<rect x="1345" y="212" width="5" height="5" fill="#f5c342"/>
<rect x="1352" y="212" width="5" height="5" fill="#f5c342"/>
<!-- move -->
<path d="M1351 227v14M1344 234h14" stroke="#c8daf0" stroke-width="1.5"/>
<path d="M1351 226l-3 3h6zM1351 242l-3-3h6zM1343 234l3-3v6zM1359 234l-3-3v6z" fill="#c8daf0"/>
<!-- rotate -->
<path d="M1348 253a6.5 6.5 0 1 0 4.5-2" stroke="#c8daf0" fill="none" stroke-width="1.4"/>
<path d="M1350 248l4 3-4 3z" fill="#c8daf0"/>
<!-- scale -->
<rect x="1344.5" y="273.5" width="14" height="13" fill="none" stroke="#fff"/>
<rect x="1351" y="280" width="2" height="2" fill="#f5c342"/>
<rect x="1352.5" y="281.5" width="5" height="5" fill="#434952" stroke="#fff" stroke-dasharray="1.5 1"/>
<!-- stretch -->
<path d="M1344.5 301v-4.5h14v4.5M1344.5 305v4.5h14v-4.5" stroke="#fff" fill="none"/>
<path d="M1351.5 308v-8M1348.5 303l3-4 3 4z" stroke="#f5c342" fill="#f5c342" stroke-width="1.6"/>
<rect x="1344" y="301" width="1" height="1" fill="#5ab4f0"/><rect x="1344" y="303" width="1" height="1" fill="#5ab4f0"/><rect x="1358" y="301" width="1" height="1" fill="#5ab4f0"/><rect x="1358" y="303" width="1" height="1" fill="#5ab4f0"/>
<!-- trim -->
<rect x="1345" y="325" width="1" height="1" fill="#5ab4f0"/><rect x="1347" y="325" width="1" height="1" fill="#5ab4f0"/>
<path d="M1350 331l3.5-8" stroke="#f5c342" stroke-width="1.2"/>
<path d="M1353 325.5h4" stroke="#fff"/>
<!-- extend -->
<rect x="1345" y="348" width="1" height="1" fill="#5ab4f0"/><rect x="1347" y="348" width="1" height="1" fill="#5ab4f0"/>
<path d="M1349 348.5h4" stroke="#fff"/>
<path d="M1354 354l3.5-8" stroke="#f5c342" stroke-width="1.2"/>
<!-- break at point -->
<path d="M1347.5 366.5h-2v12h12v-12h-6" stroke="#fff" fill="none"/>
<rect x="1348" y="365" width="2" height="2" fill="#5ab4f0"/>
<!-- break -->
<path d="M1345.5 389.5v12h12v-12" stroke="#fff" fill="none"/>
<rect x="1348" y="389" width="2" height="2" fill="#5ab4f0"/><rect x="1352" y="389" width="2" height="2" fill="#5ab4f0"/>
<!-- join -->
<path d="M1344.5 416v8M1357.5 416v8" stroke="#fff"/>
<rect x="1350" y="412" width="2" height="2" fill="#5ab4f0"/>
<path d="M1344 413h4M1346.5 411l1.5 2-1.5 2M1358 413h-4M1355.5 411l-1.5 2 1.5 2" stroke="#f5c342" fill="none"/>
<!-- chamfer -->
<path d="M1356.5 435.5v12h-12v-1.5" stroke="#fff" fill="none"/>
<path d="M1344.5 436v8M1345 435.5h8" stroke="#5ab4f0" stroke-dasharray="1 1"/>
<path d="M1344 447l13-12" stroke="#f5c342"/>
<!-- fillet -->
<path d="M1356.5 458.5v12h-12" stroke="#fff" fill="none"/>
<path d="M1344.5 459v8M1345 458.5h7" stroke="#5ab4f0" stroke-dasharray="1 1"/>
<path d="M1344.5 468a10 10 0 0 1 12-9.5" stroke="#f5c342" fill="none"/>
<!-- explode -->
<circle cx="1350" cy="488" r="6" fill="#c7d0dc"/>
<path d="M1356 480v6M1353 483h6M1354 481l4 4M1358 481l-4 4" stroke="#f5c342"/>
<!-- match props -->
<path d="M1344.5 504.5h12v6h-6v7h-6z" stroke="#5ab4f0" fill="none"/>
<rect x="1346.5" y="506.5" width="4" height="4" stroke="#5ab4f0" fill="none"/>
<path d="M1350 514l3.5-3.5 3.5 3.5-3.5 3.5z" fill="#5ab4f0"/>
<path d="M1354 510l2-2 2 2-2 2z" fill="#8c8c8c"/>
<!-- 2nd toolbar -->
<path d="M1343.5 544v-6.5h6.5" stroke="#fff" fill="none" stroke-width="1.5"/>
<rect x="1346" y="540" width="10" height="10" fill="#5ab4f0"/>
<path d="M1357.5 548v5.5h-6" stroke="#fff" fill="none" stroke-width="1.5"/>
<rect x="1343" y="560" width="8" height="8" fill="#fff"/>
<rect x="1351" y="568" width="8" height="8" fill="#fff"/>
<rect x="1352" y="563" width="4" height="4" fill="#5ab4f0"/>
<rect x="1346" y="570" width="4" height="4" fill="#5ab4f0"/>
<rect x="1346" y="584" width="8" height="8" fill="#fff"/>
<rect x="1349.5" y="587.5" width="9" height="9" fill="#5ab4f0" stroke="#2f353d" stroke-width="1"/>
<path d="M1344.5 591v4h3.5M1346.5 593l2 2-2 2" stroke="#f5c342" fill="none" stroke-width="1.1"/>

<!-- ===== STATUS BAR ===== -->
<g fill="#4b5b70" stroke="#5ab4f0" shape-rendering="crispEdges">
<rect x="410.5" y="706.5" width="19" height="19"/>
<rect x="434.5" y="706.5" width="19" height="19"/>
<rect x="458.5" y="706.5" width="19" height="19"/>
<rect x="506.5" y="706.5" width="19" height="19"/>
<rect x="530.5" y="706.5" width="19" height="19"/>
</g>
<!-- grid1 -->
<g stroke="#fff" fill="none" shape-rendering="crispEdges">
<path d="M293.5 709v13M297.5 709v13M301.5 709v13M305.5 709v13M293 709.5h13M293 713.5h13M293 717.5h13M293 721.5h13"/>
</g>
<path d="M293 722h14v-13" stroke="#5ab4f0" stroke-width="2" fill="none"/>
<!-- grid2 -->
<g stroke="#fff" fill="none" shape-rendering="crispEdges"><rect x="317.5" y="709.5" width="13" height="13"/></g>
<g stroke="#5ab4f0" shape-rendering="crispEdges"><path d="M321.5 710v12M326.5 710v12M318 713.5h12M318 718.5h12"/></g>
<!-- ortho -->
<path d="M341.5 709v13.5h14" stroke="#fff" fill="none"/>
<rect x="343.5" y="716.5" width="5" height="5" stroke="#5ab4f0" fill="none"/>
<!-- polar -->
<circle cx="371" cy="716" r="6" stroke="#fff" fill="none" stroke-width="1.3"/>
<path d="M372 716l6-6M372 716h7" stroke="#5ab4f0"/>
<!-- osnap -->
<rect x="389.5" y="709.5" width="13" height="13" stroke="#fff" fill="none"/>
<rect x="389.5" y="709.5" width="4" height="4" stroke="#e04848" fill="none"/>
<!-- box icons -->
<path d="M413 722.5h14M413 722l13-13" stroke="#fff" fill="none"/>
<rect x="418.5" y="714.5" width="2" height="2" stroke="#5ab4f0" fill="#4b5b70"/>
<path d="M437.5 708v14.5h14M436 710l1.5-2 1.5 2M449 721l2 1.5-2 1.5M438 722l6-6" stroke="#fff" fill="none"/>
<path d="M447 709l-3 4h3l-2 4 4-5h-3z" fill="#f5c342"/>
<path d="M461 714.5h6M464 711.5v6" stroke="#fff" stroke-width="1.3"/>
<rect x="466.5" y="717.5" width="8" height="4" stroke="#5ab4f0" fill="none"/>
<g fill="#fff"><rect x="486" y="711" width="12" height="2"/><rect x="486" y="714" width="12" height="3"/><rect x="486" y="718" width="12" height="3"/></g>
<path d="M508 711.5h6M511 708.5v6" stroke="#fff" stroke-width="1.3"/>
<rect x="515" y="715" width="5" height="5" fill="#fff"/>
<rect x="517.5" y="717.5" width="5" height="5" stroke="#5ab4f0" fill="#4b5b70"/>
<g fill="#dfe3e8"><rect x="536" y="709" width="3" height="3"/><rect x="540" y="709" width="3" height="3"/><rect x="544" y="709" width="3" height="3"/><rect x="544" y="713" width="3" height="3"/><rect x="544" y="717" width="3" height="3"/></g>
<rect x="533.5" y="713.5" width="9" height="9" stroke="#5ab4f0" fill="#4b5b70" stroke-dasharray="1.5 1"/>
<circle cx="538" cy="718" r="1.8" stroke="#5ab4f0" fill="none"/>
<path d="M547 718v4h-4M544.5 720.5l-1.5 1.5 1.5 1.5" stroke="#f5c342" fill="none"/>
<!-- right status icons -->
<g fill="#c4e0fb">
<path d="M1227.5 707.5L1231 716.5L1236.5 722.5L1227.5 719.8L1218.5 722.5L1224 716.5Z"/>
<path d="M1285.5 707.5L1289 716.5L1294.5 722.5L1285.5 719.8L1276.5 722.5L1282 716.5Z"/>
<path d="M1308 707.5L1311.5 716.5L1317 722.5L1308 719.8L1299 722.5L1304.5 716.5Z"/>
</g>
<g fill="#5ab4f0">
<path d="M1227.5 707.5L1228.5 716.5L1236.5 722.5L1231 716.5Z"/>
<path d="M1285.5 707.5L1286.5 716.5L1294.5 722.5L1289 716.5Z"/>
<path d="M1308 707.5L1309 716.5L1317 722.5L1311.5 716.5Z"/>
</g>
<circle cx="1291" cy="717.5" r="2.8" fill="#f5c342"/><rect x="1290" y="720" width="2.5" height="2.5" fill="#f5c342"/>
<path d="M1305 708l-3 3.5h3l-2 3.5" stroke="#8c97a6" fill="none" stroke-width="1.2"/>
<path d="M1257 711h9l-4.5 5z" fill="#fff"/>
<circle cx="1330" cy="715.5" r="4.2" fill="none" stroke="#5ab4f0" stroke-width="2.4"/>
<path d="M1330 708.5v14M1323 715.5h14M1325 710.5l10 10M1335 710.5l-10 10" stroke="#5ab4f0" stroke-width="1.8" stroke-dasharray="2 10"/>
<path d="M1345.5 708.5h4M1345.5 708.5v4M1359.5 708.5h-4M1359.5 708.5v4M1345.5 722.5h4M1345.5 722.5v-4M1359.5 722.5h-4M1359.5 722.5v-4M1346 709l4.5 4.5M1359 709l-4.5 4.5M1346 722l4.5-4.5M1359 722l-4.5-4.5" stroke="#fff" fill="none" stroke-width="1.1"/>
</svg>
</body></html>
